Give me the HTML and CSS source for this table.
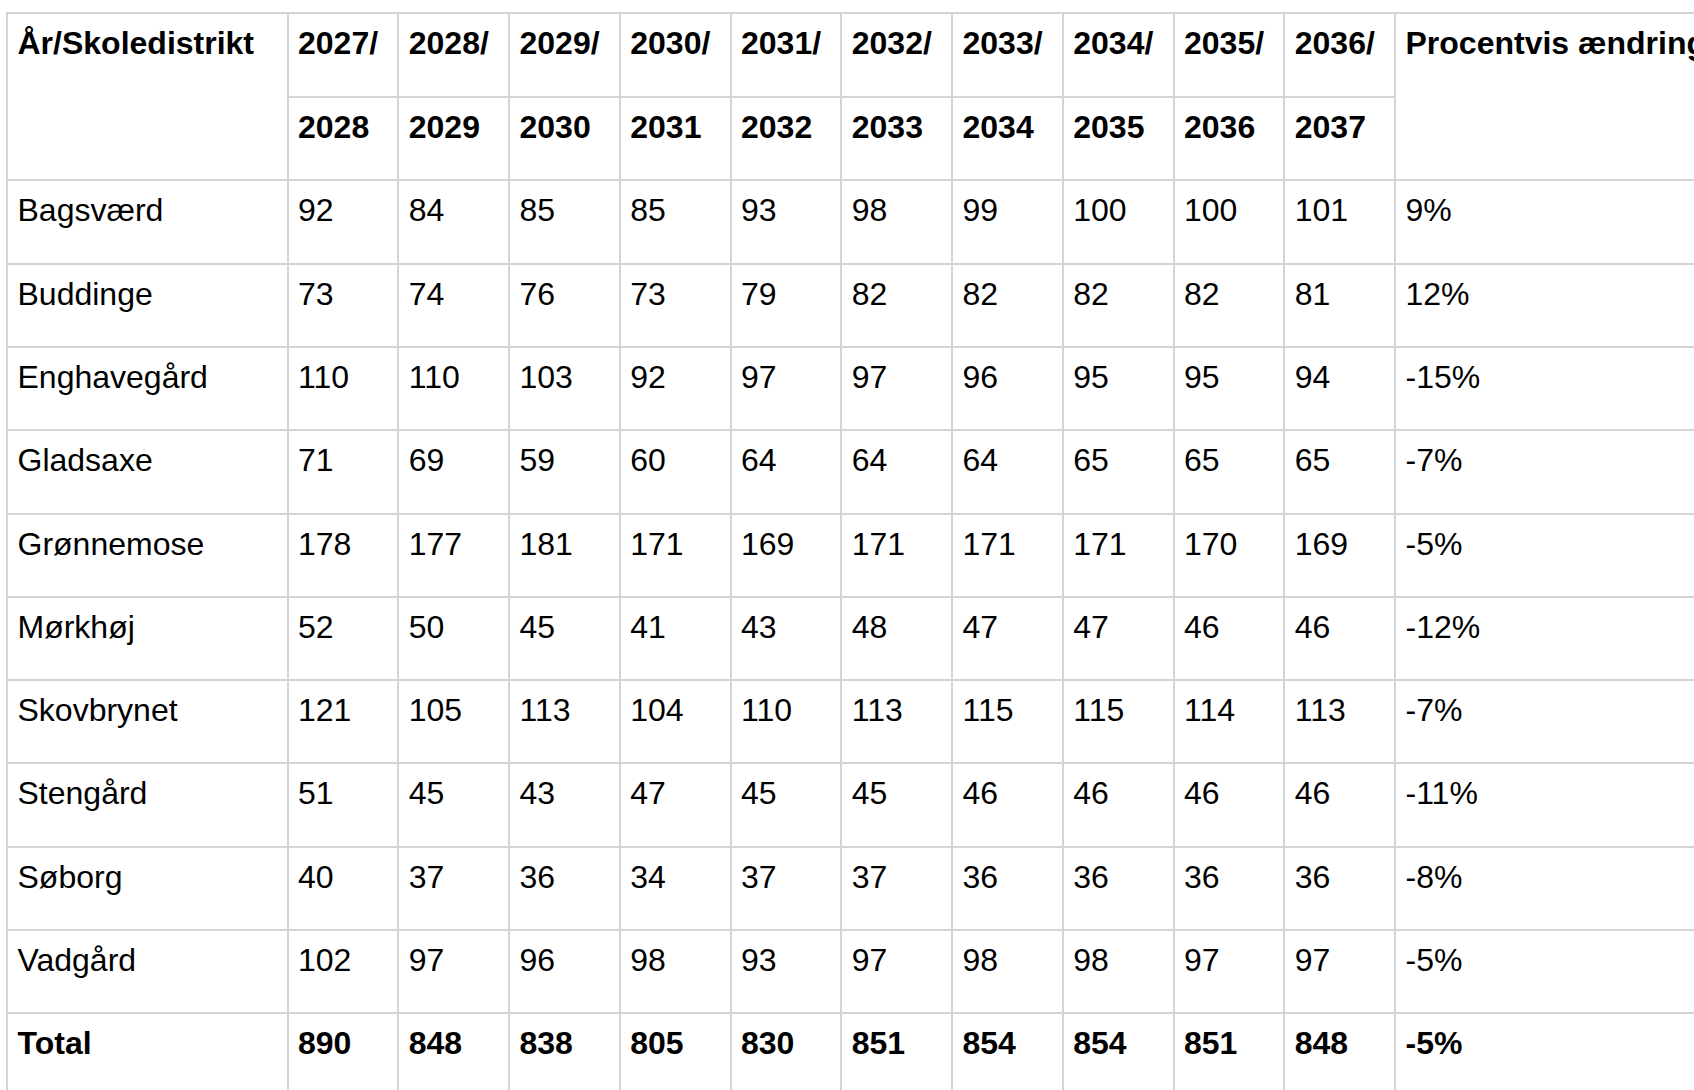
FILE: index.html
```html
<!DOCTYPE html>
<html lang="da">
<head>
<meta charset="utf-8">
<title>Elevtal pr. skoledistrikt</title>
<link rel="stylesheet" href="styles.css">
</head>
<body>
<table class="grid">
  <colgroup>
    <col class="c-name">
    <col class="c-year"><col class="c-year"><col class="c-year"><col class="c-year"><col class="c-year">
    <col class="c-year"><col class="c-year"><col class="c-year"><col class="c-year"><col class="c-year">
    <col class="c-pct">
  </colgroup>
  <thead>
    <tr>
      <th rowspan="2">År/Skoledistrikt</th>
      <th>2027/</th><th>2028/</th><th>2029/</th><th>2030/</th><th>2031/</th>
      <th>2032/</th><th>2033/</th><th>2034/</th><th>2035/</th><th>2036/</th>
      <th rowspan="2">Procentvis ændring</th>
    </tr>
    <tr>
      <th>2028</th><th>2029</th><th>2030</th><th>2031</th><th>2032</th>
      <th>2033</th><th>2034</th><th>2035</th><th>2036</th><th>2037</th>
    </tr>
  </thead>
  <tbody>
    <tr><td>Bagsværd</td><td>92</td><td>84</td><td>85</td><td>85</td><td>93</td><td>98</td><td>99</td><td>100</td><td>100</td><td>101</td><td>9%</td></tr>
    <tr><td>Buddinge</td><td>73</td><td>74</td><td>76</td><td>73</td><td>79</td><td>82</td><td>82</td><td>82</td><td>82</td><td>81</td><td>12%</td></tr>
    <tr><td>Enghavegård</td><td>110</td><td>110</td><td>103</td><td>92</td><td>97</td><td>97</td><td>96</td><td>95</td><td>95</td><td>94</td><td>-15%</td></tr>
    <tr><td>Gladsaxe</td><td>71</td><td>69</td><td>59</td><td>60</td><td>64</td><td>64</td><td>64</td><td>65</td><td>65</td><td>65</td><td>-7%</td></tr>
    <tr><td>Grønnemose</td><td>178</td><td>177</td><td>181</td><td>171</td><td>169</td><td>171</td><td>171</td><td>171</td><td>170</td><td>169</td><td>-5%</td></tr>
    <tr><td>Mørkhøj</td><td>52</td><td>50</td><td>45</td><td>41</td><td>43</td><td>48</td><td>47</td><td>47</td><td>46</td><td>46</td><td>-12%</td></tr>
    <tr><td>Skovbrynet</td><td>121</td><td>105</td><td>113</td><td>104</td><td>110</td><td>113</td><td>115</td><td>115</td><td>114</td><td>113</td><td>-7%</td></tr>
    <tr><td>Stengård</td><td>51</td><td>45</td><td>43</td><td>47</td><td>45</td><td>45</td><td>46</td><td>46</td><td>46</td><td>46</td><td>-11%</td></tr>
    <tr><td>Søborg</td><td>40</td><td>37</td><td>36</td><td>34</td><td>37</td><td>37</td><td>36</td><td>36</td><td>36</td><td>36</td><td>-8%</td></tr>
    <tr><td>Vadgård</td><td>102</td><td>97</td><td>96</td><td>98</td><td>93</td><td>97</td><td>98</td><td>98</td><td>97</td><td>97</td><td>-5%</td></tr>
    <tr class="total"><td>Total</td><td>890</td><td>848</td><td>838</td><td>805</td><td>830</td><td>851</td><td>854</td><td>854</td><td>851</td><td>848</td><td>-5%</td></tr>
  </tbody>
</table>
</body>
</html>
```

FILE: styles.css
```css
html, body {
  margin: 0;
  padding: 0;
  background: #ffffff;
  overflow: hidden;
}

body {
  font-family: "Liberation Sans", Arial, Helvetica, sans-serif;
  font-size: 32px;
  color: #000000;
}

.grid {
  border-collapse: collapse;
  table-layout: fixed;
  width: 1808px;
  margin: 12px 0 0 6px;
}

.c-name { width: 280.5px; }
.c-year { width: 110.75px; }
.c-pct { width: 420px; }

.grid th,
.grid td {
  border: 2px solid #d4d4d4;
  padding: 11px 9.5px 0 9.5px;
  vertical-align: top;
  text-align: left;
  white-space: nowrap;
  overflow: hidden;
  line-height: normal;
}

.grid th {
  font-weight: bold;
}

.grid thead tr {
  height: 83.7px;
}

.grid tbody tr {
  height: 83.3px;
}

.grid .total td {
  font-weight: bold;
}
```
